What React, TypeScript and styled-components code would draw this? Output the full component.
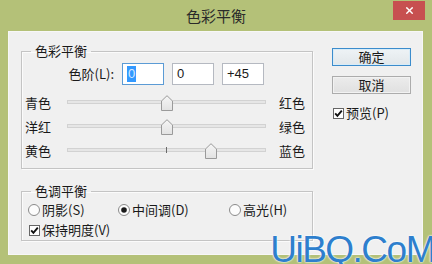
import styled, { createGlobalStyle } from "styled-components";
import { X } from "lucide-react";

const GlobalStyle = createGlobalStyle`
  html, body { margin: 0; padding: 0; }
  body {
    background: #b4c178;
    font-family: "Noto Sans CJK SC", "Noto Sans", sans-serif;
    color: #1a1a1a;
  }
`;

const sliders = [
  { left: "青色", right: "红色", value: 0 },
  { left: "洋红", right: "绿色", value: 0 },
  { left: "黄色", right: "蓝色", value: 45 },
];

const Thumb = () => (
  <ThumbWrap>
    <svg width="12" height="16" viewBox="0 0 12 16">
      <defs>
        <linearGradient id="tg" x1="0" y1="0" x2="0" y2="1">
          <stop offset="0" stopColor="#f6f6f6" />
          <stop offset="1" stopColor="#e2e2e2" />
        </linearGradient>
      </defs>
      <path d="M0.5 6 L6 0.7 L11.5 6 V15.5 H0.5 Z" fill="url(#tg)" stroke="#9a9a9a" />
    </svg>
  </ThumbWrap>
);

const CheckBox = () => (
  <Box>
    <svg width="11" height="11" viewBox="0 0 11 11">
      <rect x="0.5" y="0.5" width="10" height="10" fill="#fff" stroke="#666" />
      <path d="M2.2 5.4 L4.4 7.8 L8.8 2.6" fill="none" stroke="#111" strokeWidth="1.9" />
    </svg>
  </Box>
);

const Radio: React.FC<{ checked?: boolean }> = ({ checked }) => (
  <Box>
    <svg width="12" height="12" viewBox="0 0 12 12">
      <circle cx="6" cy="6" r="5.5" fill="#fcfcfc" stroke="#8a8a8a" />
      {checked && <circle cx="6" cy="6" r="2.8" fill="#1a1a1a" />}
    </svg>
  </Box>
);

export default function App() {
  return (
    <>
      <GlobalStyle />
      <Window>
        <TitleBar>
          <span />
          <Title>色彩平衡</Title>
          <CloseButton>
            <X size={11} strokeWidth={3.2} color="#fff" />
          </CloseButton>
        </TitleBar>
        <Client>
          <LeftColumn>
            <Group>
              <Legend>色彩平衡</Legend>
              <LevelRow>
                <LevelLabel>色阶(L):</LevelLabel>
                <Field $focused>
                  <Selected>0</Selected>
                </Field>
                <Field>0</Field>
                <Field>+45</Field>
              </LevelRow>
              {sliders.map((s) => (
                <SliderRow key={s.left}>
                  <SideLabel>{s.left}</SideLabel>
                  <TrackArea>
                    <Track />
                    <Tick />
                    <div style={{ position: "absolute", top: 4, left: `calc(${(s.value + 100) / 2}% - 6px)` }}>
                      <Thumb />
                    </div>
                  </TrackArea>
                  <SideLabel>{s.right}</SideLabel>
                </SliderRow>
              ))}
            </Group>
            <Group $second>
              <Legend>色调平衡</Legend>
              <RadioRow>
                <Option>
                  <Radio />
                  阴影(S)
                </Option>
                <Option>
                  <Radio checked />
                  中间调(D)
                </Option>
                <Option>
                  <Radio />
                  高光(H)
                </Option>
              </RadioRow>
              <CheckRow>
                <Option>
                  <CheckBox />
                  保持明度(V)
                </Option>
              </CheckRow>
            </Group>
          </LeftColumn>
          <RightColumn>
            <Button $primary>确定</Button>
            <Button>取消</Button>
            <PreviewRow>
              <Option>
                <CheckBox />
                预览(P)
              </Option>
            </PreviewRow>
          </RightColumn>
        </Client>
        <Watermark>UiBQ.CoM</Watermark>
      </Window>
    </>
  );
}

const Window = styled.div`
  position: relative;
  width: 432px;
  height: 264px;
  display: flex;
  flex-direction: column;
  background: #b4c178;
  overflow: hidden;
`;

const TitleBar = styled.div`
  height: 31px;
  display: grid;
  grid-template-columns: 1fr auto 1fr;
`;

const Title = styled.div`
  font-size: 15px;
  line-height: 31px;
  color: #2a2a2a;
`;

const CloseButton = styled.div`
  justify-self: end;
  align-self: start;
  margin: 1px 7px 0 0;
  width: 32px;
  height: 19px;
  background: #c75050;
  display: flex;
  align-items: center;
  justify-content: center;
`;

const Client = styled.div`
  flex: 1;
  margin: 0 9px 9px 8px;
  background: #f0f0f0;
  box-shadow: inset 0 0 0 1px #f7f7f7;
  display: flex;
  padding: 12px 0 0 13px;
  box-sizing: border-box;
  font-size: 13px;
`;

const LeftColumn = styled.div`
  width: 292px;
  display: flex;
  flex-direction: column;
`;

const RightColumn = styled.div`
  margin-left: 19px;
  width: 79px;
  display: flex;
  flex-direction: column;
`;

const Group = styled.fieldset<{ $second?: boolean }>`
  margin: ${(p) => (p.$second ? "14px 0 0" : "0")};
  padding: 0 6px ${(p) => (p.$second ? "1px" : "5px")} 3px;
  min-width: 0;
  border: 1px solid #c4c4c4;
  box-shadow: inset 1px 1px 0 #fbfbfb, 1px 1px 0 #fbfbfb;
`;

const Legend = styled.legend`
  margin-left: 6px;
  padding: 0 4px;
  font-size: 13px;
  line-height: 16px;
`;

const LevelRow = styled.div`
  margin-top: 4px;
  height: 22px;
  display: flex;
  align-items: center;
  gap: 8px;
`;

const LevelLabel = styled.div`
  width: 89px;
  text-align: right;
  line-height: 16px;
`;

const Field = styled.div<{ $focused?: boolean }>`
  box-sizing: border-box;
  width: 42px;
  height: 22px;
  padding: 0 0 0 4px;
  background: #fff;
  border: 1px solid ${(p) => (p.$focused ? "#5b9bd5" : "#b5b9c1")};
  font-family: "Liberation Sans", Arial, sans-serif;
  font-size: 13px;
  line-height: 20px;
`;

const Selected = styled.span`
  display: inline-block;
  background: #3399ff;
  color: #dbe9ff;
  line-height: 16px;
  padding: 0 1px;
`;

const SliderRow = styled.div`
  height: 24px;
  display: grid;
  grid-template-columns: 42px 199px 26px;
  align-items: center;
  ${LevelRow} + & {
    margin-top: 6px;
  }
  & > :last-child {
    margin-left: 13px;
  }
`;

const SideLabel = styled.div`
  line-height: 16px;
  white-space: nowrap;
`;

const TrackArea = styled.div`
  position: relative;
  height: 24px;
`;

const Track = styled.div`
  margin-top: 9px;
  height: 2px;
  background: #e6e6e6;
  border: 1px solid #d2d2d2;
`;

const Tick = styled.div`
  position: absolute;
  left: 99px;
  top: 8px;
  width: 1px;
  height: 6px;
  background: #6a6a6a;
`;

const ThumbWrap = styled.div`
  display: block;
  line-height: 0;
`;

const RadioRow = styled.div`
  margin-top: 2px;
  height: 18px;
  display: grid;
  grid-template-columns: 90px 111px auto;
  padding-left: 3px;
`;

const CheckRow = styled.div`
  margin-top: 2px;
  height: 18px;
  display: flex;
  padding-left: 4px;
`;

const Option = styled.label`
  display: flex;
  align-items: center;
  gap: 2px;
  line-height: 16px;
  white-space: nowrap;
`;

const Box = styled.span`
  display: inline-flex;
  line-height: 0;
`;

const Button = styled.div<{ $primary?: boolean }>`
  box-sizing: border-box;
  height: 18px;
  margin-top: ${(p) => (p.$primary ? "5px" : "10px")};
  border: 1px solid ${(p) => (p.$primary ? "#3c8ccc" : "#acacac")};
  background: ${(p) =>
    p.$primary ? "linear-gradient(#eef3f6, #e2e7ea)" : "linear-gradient(#ececec, #e0e0e0)"};
  box-shadow: inset 0 0 0 1px ${(p) => (p.$primary ? "#d8ecf8" : "#f2f2f2")};
  text-align: center;
  font-size: 13px;
  line-height: 16px;
`;

const PreviewRow = styled.div`
  margin-top: 11px;
  height: 16px;
  display: flex;
  padding-left: 1px;
`;

const Watermark = styled.div`
  position: absolute;
  right: -3px;
  bottom: -6px;
  font-family: "Liberation Sans", Arial, sans-serif;
  font-size: 37px;
  letter-spacing: -1.5px;
  color: #2e7fcd;
  text-shadow: 0 0 2px #fff, 0 0 2px #fff;
  line-height: 40px;
`;
